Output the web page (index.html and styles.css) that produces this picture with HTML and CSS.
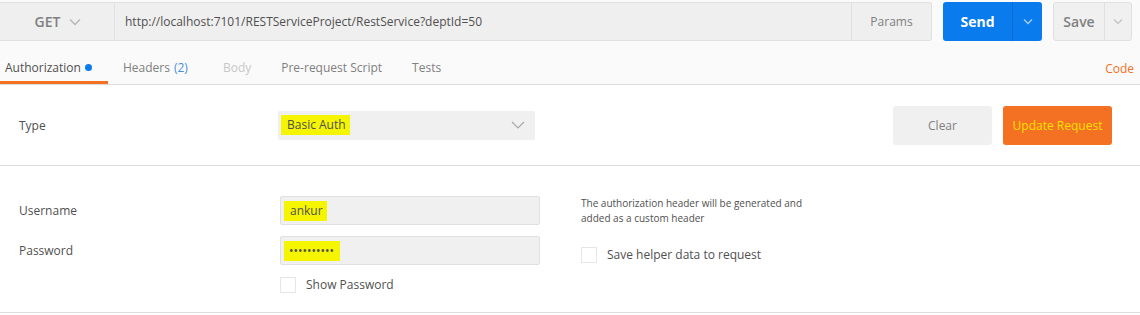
FILE: index.html
```html
<!DOCTYPE html>
<html>
<head>
<meta charset="utf-8">
<link rel="stylesheet" href="styles.css">
</head>
<body>
<div class="topbar">
  <div class="urlgroup">
    <div class="method">GET <svg class="chev" width="12" height="8" viewBox="0 0 12 8"><path d="M1 1.5 L6 6.5 L11 1.5" fill="none" stroke="#b5b5b5" stroke-width="1.3"/></svg></div>
    <div class="url">http://localhost:7101/RESTServiceProject/RestService?deptId=50</div>
    <div class="params">Params</div>
  </div>
  <div class="send">
    <span class="send-label">Send</span>
    <span class="send-split"><svg width="10" height="7" viewBox="0 0 10 7"><path d="M1 1.5 L5 5.5 L9 1.5" fill="none" stroke="#a9cdf7" stroke-width="1.3"/></svg></span>
  </div>
  <div class="save">
    <span class="save-label">Save</span>
    <span class="save-split"><svg width="10" height="7" viewBox="0 0 10 7"><path d="M1 1.5 L5 5.5 L9 1.5" fill="none" stroke="#c0c0c0" stroke-width="1.1"/></svg></span>
  </div>
</div>
<div class="tabs">
  <div class="tab active">Authorization <span class="dot"></span></div>
  <div class="tab headers">Headers <span class="count">(2)</span></div>
  <div class="tab disabled">Body</div>
  <div class="tab">Pre-request Script</div>
  <div class="tab">Tests</div>
  <div class="spacer"></div>
  <div class="code">Code</div>
</div>
<div class="section type-section">
  <div class="label">Type</div>
  <div class="select"><span class="hl">Basic Auth</span><svg class="sel-chev" width="14" height="8" viewBox="0 0 14 8"><path d="M1 1 L7 7 L13 1" fill="none" stroke="#a8a8a8" stroke-width="1.2"/></svg></div>
  <div class="spacer"></div>
  <div class="btn clear">Clear</div>
  <div class="btn update">Update Request</div>
</div>
<div class="section cred-section">
  <div class="fields">
    <div class="row">
      <div class="label">Username</div>
      <div class="input"><span class="hl">ankur</span></div>
    </div>
    <div class="row">
      <div class="label">Password</div>
      <div class="input"><span class="hl pw">••••••••••</span></div>
    </div>
    <div class="row check-row">
      <div class="label"></div>
      <label class="check"><span class="box"></span>Show Password</label>
    </div>
  </div>
  <div class="help">
    <p class="help-text">The authorization header will be generated and<br>added as a custom header</p>
    <label class="check"><span class="box"></span>Save helper data to request</label>
  </div>
</div>
</body>
</html>
```

FILE: styles.css
```css
* { box-sizing: border-box; }
html, body { margin: 0; padding: 0; }
body {
  width: 1140px;
  height: 315px;
  background: #ffffff;
  font-family: "Open Sans", "Noto Sans", "Liberation Sans", sans-serif;
  font-size: 12px;
  color: #505050;
  overflow: hidden;
}
.topbar {
  display: flex;
  align-items: stretch;
  height: 42px;
  padding: 2px 8px 1px 0;
  gap: 11px;
  background: #fafafa;
}
.urlgroup {
  flex: 1;
  display: flex;
  background: #efefef;
  border: 1px solid #e0e0e0;
  border-left: none;
  border-radius: 0 3px 3px 0;
}
.method {
  width: 115px;
  display: flex;
  align-items: center;
  justify-content: center;
  gap: 9px;
  font-size: 14px;
  font-weight: 600;
  color: #808080;
  border-right: 1px solid #e0e0e0;
  padding-left: 2px;
}
.url {
  flex: 1;
  display: flex;
  align-items: center;
  padding-left: 10px;
  color: #505050;
  font-size: 12px;
}
.params {
  width: 80px;
  display: flex;
  align-items: center;
  justify-content: center;
  border-left: 1px solid #e0e0e0;
  color: #808080;
}
.send {
  width: 99px;
  display: flex;
  background: #097bed;
  border-radius: 3px;
  color: #fff;
}
.send-label {
  width: 69px;
  display: flex;
  align-items: center;
  justify-content: center;
  font-size: 14px;
  font-weight: 700;
}
.send-split {
  flex: 1;
  display: flex;
  align-items: center;
  justify-content: center;
  border-left: 1px solid #0a6ad0;
}
.save {
  width: 79px;
  display: flex;
  background: #f0f0f0;
  border: 1px solid #e0e0e0;
  border-radius: 3px;
}
.save-label {
  width: 50px;
  display: flex;
  align-items: center;
  justify-content: center;
  font-size: 14px;
  font-weight: 600;
  color: #808080;
}
.save-split {
  flex: 1;
  display: flex;
  align-items: center;
  justify-content: center;
  border-left: 1px solid #e0e0e0;
}
.tabs {
  display: flex;
  align-items: stretch;
  height: 43px;
  background: #fafafa;
  border-bottom: 1px solid #dcdcdc;
  padding-right: 6px;
}
.tab {
  display: flex;
  align-items: center;
  padding: 11px 15px 0;
  color: #808080;
  border-bottom: 3px solid transparent;
}
.tab.headers { padding-right: 20px; }
.tab.active {
  padding: 11px 15px 0 5px;
  width: 108px;
  color: #505050;
  border-bottom-color: #f47023;
}
.tab.disabled { color: #c8c8c8; }
.dot {
  width: 7px;
  height: 7px;
  border-radius: 50%;
  background: #097bed;
  margin-left: 4px;
}
.count { color: #4a90e2; margin-left: 4px; }
.spacer { flex: 1; }
.code {
  display: flex;
  align-items: center;
  color: #f47023;
  padding-top: 10px;
}
.section { border-bottom: 1px solid #dcdcdc; }
.type-section {
  display: flex;
  align-items: center;
  height: 81px;
  padding: 0 28px 0 19px;
}
.type-section .label { width: 259px; }
.select {
  width: 257px;
  height: 29px;
  background: #f0f0f0;
  border-radius: 2px;
  display: flex;
  align-items: center;
  justify-content: space-between;
  padding: 0 10px 0 3px;
}
.hl {
  background: #f5f500;
  color: #505050;
  padding: 2px 4px 3px 6px;
  line-height: 15px;
}
.btn {
  height: 39px;
  display: flex;
  align-items: center;
  justify-content: center;
  border-radius: 3px;
}
.clear {
  width: 99px;
  background: #f0f0f0;
  color: #808080;
  margin-right: 11px;
}
.update {
  width: 109px;
  background: #f47023;
  color: #ffe000;
}
.cred-section {
  display: flex;
  height: 147px;
  padding: 30px 0 0 19px;
}
.fields {
  display: flex;
  flex-direction: column;
  gap: 11px;
}
.row {
  display: flex;
  align-items: center;
}
.row .label { width: 261px; }
.input {
  width: 260px;
  height: 29px;
  background: #f0f0f0;
  border: 1px solid #e0e0e0;
  border-radius: 2px;
  display: flex;
  align-items: center;
  padding-left: 3px;
}
.hl.pw { font-size: 12px; letter-spacing: 0; padding: 2px 6px 3px 5px; }
.check {
  display: flex;
  align-items: center;
  color: #505050;
}
.box {
  width: 16px;
  height: 16px;
  border: 1px solid #e6e6e6;
  background: #fff;
  margin-right: 10px;
}
.help {
  margin-left: 41px;
  display: flex;
  flex-direction: column;
}
.help-text {
  margin: 0;
  font-size: 10px;
  line-height: 15px;
  color: #505050;
}
.help .check { margin-top: 20px; }
```
